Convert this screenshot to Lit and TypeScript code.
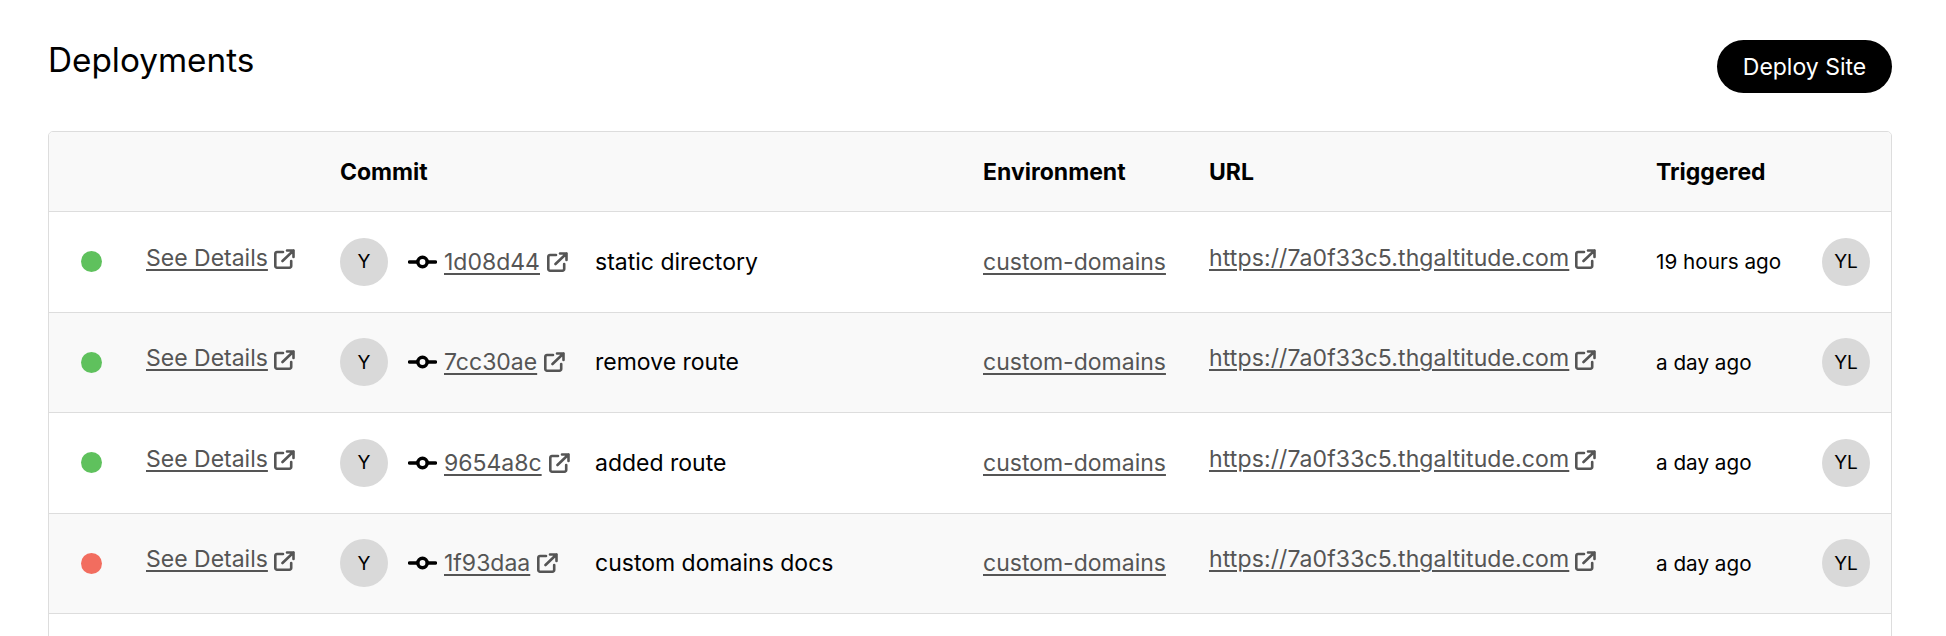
import { LitElement, css, html } from "lit";
import { customElement } from "lit/decorators.js";

interface Deployment {
  ok: boolean;
  hash: string;
  message: string;
  when: string;
}

const deployments: Deployment[] = [
  { ok: true, hash: "1d08d44", message: "static directory", when: "19 hours ago" },
  { ok: true, hash: "7cc30ae", message: "remove route", when: "a day ago" },
  { ok: true, hash: "9654a8c", message: "added route", when: "a day ago" },
  { ok: false, hash: "1f93daa", message: "custom domains docs", when: "a day ago" },
];

const externalIcon = html`
  <svg class="ext" viewBox="0 0 21 20" fill="none" stroke="currentColor" stroke-width="2.600" stroke-linecap="round" stroke-linejoin="round">
    <path d="M9 3H3a1.700 1.700 0 0 0-1.700 1.700v12.300a1.700 1.700 0 0 0 1.700 1.700h12.500a1.700 1.700 0 0 0 1.700-1.700V12" />
    <path d="M8.500 12 19.500 1.500M13 1.500h6.500V8" />
  </svg>
`;

const commitIcon = html`
  <svg class="commit-icon" viewBox="0 0 29 20" fill="none" stroke="#000" stroke-width="3.500" stroke-linecap="round">
    <circle cx="14.500" cy="10" r="4.700" />
    <path d="M1.500 10h8M19.500 10h8" />
  </svg>
`;

@customElement("app-root")
class AppRoot extends LitElement {
  static styles = css`
    :host {
      display: block;
      height: 636px;
      overflow: hidden;
      background: #fff;
      color: #000;
      font-family: Inter, "Liberation Sans", sans-serif;
      font-size: 23px;
    }
    .page {
      padding: 40px 54px 0 48px;
    }
    .top {
      display: flex;
      justify-content: space-between;
      align-items: flex-start;
      margin-bottom: 38px;
    }
    h1 {
      margin: 0;
      font-size: 33.300px;
      font-weight: 400;
      line-height: 40px;
    }
    .deploy {
      width: 175px;
      height: 53px;
      border: 0;
      border-radius: 27px;
      background: #000;
      color: #fff;
      font: 400 23px Inter, sans-serif;
      padding: 0;
    }
    .table {
      border: 1px solid #ddd;
      border-radius: 5px;
      overflow: hidden;
    }
    .row {
      display: grid;
      grid-template-columns: 97px 194px 643px 226px 447px 166px 1fr;
      align-items: center;
      height: 99.500px;
      border-bottom: 1px solid #ddd;
    }
    .row.head {
      height: 79px;
      background: #f9f9f9;
      font-weight: 700;
    }
    .row.even {
      background: #f9f9f9;
    }
    .dot {
      width: 21px;
      height: 21px;
      border-radius: 50%;
      margin-left: 32px;
      background: #5fc15d;
    }
    .dot.fail {
      background: #f26d5f;
    }
    a {
      color: #555;
      text-decoration: underline;
      text-decoration-thickness: 2px;
      text-underline-offset: 3px;
    }
    .raised {
      display: flex;
      align-items: center;
      gap: 6px;
      margin-top: -8px;
      color: #555;
    }
    .raised .ext {
      margin-top: 3px;
    }
    .url {
      letter-spacing: 0.12px;
    }
    .ext {
      width: 21px;
      height: 20px;
      flex: none;
    }
    .commit {
      display: flex;
      align-items: center;
    }
    .avatar {
      width: 48px;
      height: 48px;
      border-radius: 50%;
      background: #d9d9d9;
      display: flex;
      align-items: center;
      justify-content: center;
      font-size: 19px;
      flex: none;
    }
    .commit-icon {
      width: 29px;
      height: 20px;
      margin-left: 20px;
      flex: none;
    }
    .hash {
      display: flex;
      align-items: center;
      gap: 7px;
      margin-left: 7px;
      width: 151px;
      color: #555;
      flex: none;
    }
    .when {
      font-size: 20.700px;
    }
  `;

  render() {
    return html`
      <div class="page">
        <div class="top">
          <h1>Deployments</h1>
          <button class="deploy">Deploy Site</button>
        </div>
        <div class="table">
          <div class="row head">
            <span></span><span></span><span>Commit</span><span>Environment</span><span>URL</span><span>Triggered</span><span></span>
          </div>
          ${deployments.map(
            (d, i) => html`
              <div class="row ${i % 2 ? "even" : ""}">
                <span class="dot ${d.ok ? "" : "fail"}"></span>
                <span class="raised"><a href="#">See Details</a>${externalIcon}</span>
                <span class="commit">
                  <span class="avatar">Y</span>
                  ${commitIcon}
                  <span class="hash"><a href="#">${d.hash}</a>${externalIcon}</span>
                  <span>${d.message}</span>
                </span>
                <span><a href="#">custom-domains</a></span>
                <span class="raised"><a class="url" href="#">https://7a0f33c5.thgaltitude.com</a>${externalIcon}</span>
                <span class="when">${d.when}</span>
                <span class="avatar">YL</span>
              </div>
            `
          )}
          <div class="row"></div>
        </div>
      </div>
    `;
  }
}

declare global {
  interface HTMLElementTagNameMap {
    "app-root": AppRoot;
  }
}
